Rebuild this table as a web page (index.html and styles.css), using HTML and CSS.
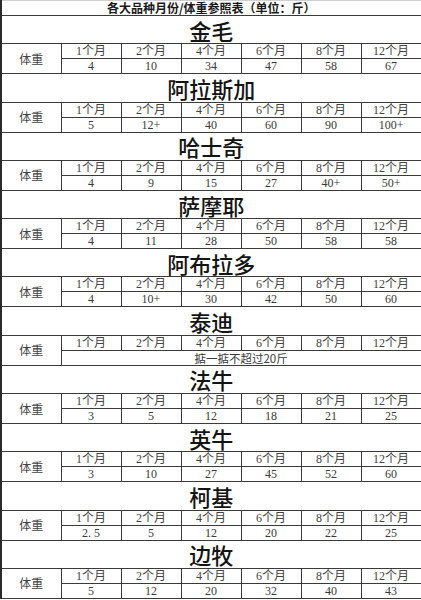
FILE: index.html
```html
<!DOCTYPE html>
<html lang="zh-CN">
<head>
<meta charset="utf-8">
<title>各大品种月份/体重参照表</title>
<link rel="stylesheet" href="styles.css">
</head>
<body>
<table class="chart">
  <colgroup>
    <col class="c-label"><col class="c-m"><col class="c-m"><col class="c-m"><col class="c-m"><col class="c-m"><col class="c-m">
  </colgroup>
  <tbody>
    <tr class="r-title"><td colspan="7">各大品种月份/体重参照表（单位：斤）</td></tr>

    <tr class="r-breed"><td colspan="7">金毛</td></tr>
    <tr class="r-month"><td class="label" rowspan="2">体重</td><td>1个月</td><td>2个月</td><td>4个月</td><td>6个月</td><td>8个月</td><td>12个月</td></tr>
    <tr class="r-val"><td>4</td><td>10</td><td>34</td><td>47</td><td>58</td><td>67</td></tr>

    <tr class="r-breed"><td colspan="7">阿拉斯加</td></tr>
    <tr class="r-month"><td class="label" rowspan="2">体重</td><td>1个月</td><td>2个月</td><td>4个月</td><td>6个月</td><td>8个月</td><td>12个月</td></tr>
    <tr class="r-val"><td>5</td><td>12+</td><td>40</td><td>60</td><td>90</td><td>100+</td></tr>

    <tr class="r-breed"><td colspan="7">哈士奇</td></tr>
    <tr class="r-month"><td class="label" rowspan="2">体重</td><td>1个月</td><td>2个月</td><td>4个月</td><td>6个月</td><td>8个月</td><td>12个月</td></tr>
    <tr class="r-val"><td>4</td><td>9</td><td>15</td><td>27</td><td>40+</td><td>50+</td></tr>

    <tr class="r-breed"><td colspan="7">萨摩耶</td></tr>
    <tr class="r-month"><td class="label" rowspan="2">体重</td><td>1个月</td><td>2个月</td><td>4个月</td><td>6个月</td><td>8个月</td><td>12个月</td></tr>
    <tr class="r-val"><td>4</td><td>11</td><td>28</td><td>50</td><td>58</td><td>58</td></tr>

    <tr class="r-breed"><td colspan="7">阿布拉多</td></tr>
    <tr class="r-month"><td class="label" rowspan="2">体重</td><td>1个月</td><td>2个月</td><td>4个月</td><td>6个月</td><td>8个月</td><td>12个月</td></tr>
    <tr class="r-val"><td>4</td><td>10+</td><td>30</td><td>42</td><td>50</td><td>60</td></tr>

    <tr class="r-breed"><td colspan="7">泰迪</td></tr>
    <tr class="r-month"><td class="label" rowspan="2">体重</td><td>1个月</td><td>2个月</td><td>4个月</td><td>6个月</td><td>8个月</td><td>12个月</td></tr>
    <tr class="r-val"><td class="note" colspan="6">掂一掂不超过20斤</td></tr>

    <tr class="r-breed"><td colspan="7">法牛</td></tr>
    <tr class="r-month"><td class="label" rowspan="2">体重</td><td>1个月</td><td>2个月</td><td>4个月</td><td>6个月</td><td>8个月</td><td>12个月</td></tr>
    <tr class="r-val"><td>3</td><td>5</td><td>12</td><td>18</td><td>21</td><td>25</td></tr>

    <tr class="r-breed"><td colspan="7">英牛</td></tr>
    <tr class="r-month"><td class="label" rowspan="2">体重</td><td>1个月</td><td>2个月</td><td>4个月</td><td>6个月</td><td>8个月</td><td>12个月</td></tr>
    <tr class="r-val"><td>3</td><td>10</td><td>27</td><td>45</td><td>52</td><td>60</td></tr>

    <tr class="r-breed"><td colspan="7">柯基</td></tr>
    <tr class="r-month"><td class="label" rowspan="2">体重</td><td>1个月</td><td>2个月</td><td>4个月</td><td>6个月</td><td>8个月</td><td>12个月</td></tr>
    <tr class="r-val"><td>2. 5</td><td>5</td><td>12</td><td>20</td><td>22</td><td>25</td></tr>

    <tr class="r-breed"><td colspan="7">边牧</td></tr>
    <tr class="r-month"><td class="label" rowspan="2">体重</td><td>1个月</td><td>2个月</td><td>4个月</td><td>6个月</td><td>8个月</td><td>12个月</td></tr>
    <tr class="r-val"><td>5</td><td>12</td><td>20</td><td>32</td><td>40</td><td>43</td></tr>
  </tbody>
</table>
</body>
</html>
```

FILE: styles.css
```css
html, body {
  margin: 0;
  padding: 0;
  background: #ffffff;
}

.chart {
  border-collapse: collapse;
  table-layout: fixed;
  width: 420px;
  border-left: 2px solid #2a2a2a;
  color: #3a3a3a;
  font-family: "Liberation Serif", "Noto Sans CJK SC", serif;
  font-size: 12px;
  line-height: 12px;
}

.c-label { width: 60px; }
.c-m { width: 60px; }

.chart td {
  border: 1px solid #3a3a3a;
  padding: 0;
  text-align: center;
  vertical-align: middle;
  white-space: nowrap;
}

.r-title td {
  height: 14px;
  border-top: 1px solid #d0d0d0;
  font-family: "Noto Sans CJK SC", sans-serif;
  font-weight: bold;
  font-size: 12px;
  line-height: 12px;
  color: #1a1a1a;
}

.r-breed td {
  height: 27.3px;
  font-family: "Noto Sans CJK SC", sans-serif;
  font-size: 22px;
  line-height: 24px;
  font-weight: 500;
  color: #141414;
}

.r-month td {
  height: 14px;
  font-size: 12px;
  color: #444;
}

.r-val td {
  height: 14px;
  font-size: 12px;
}

.chart td.label {
  font-family: "Noto Sans CJK SC", sans-serif;
  font-size: 12px;
  color: #444;
}

.chart td.note {
  font-family: "Noto Sans CJK SC", sans-serif;
  font-size: 11.5px;
}
```
